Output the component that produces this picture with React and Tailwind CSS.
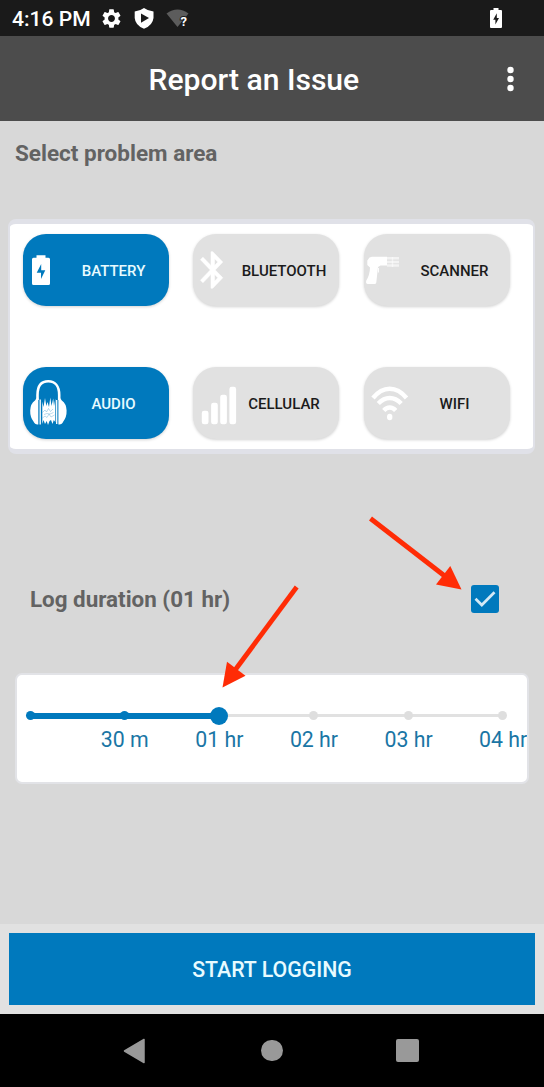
import React from "react";
import { MdSettings } from "react-icons/md";

function StatusBar() {
  return (
    <div className="flex h-9 items-center bg-[#1a1a1a] pl-3 text-white">
      <span className="w-[79px] whitespace-nowrap pt-[2px] text-[21.1px] leading-[34px] font-medium">4:16 PM</span>
      <MdSettings className="ml-[8.5px] size-[23px]" />
      <svg className="ml-[11.5px] h-9 w-5" viewBox="134 0 20 36">
        <path d="M144 8Q148 11 153.500 11.500V18Q152.700 25.500 144 28.700Q135.300 25.500 134.700 18V11.500Q140 11 144 8Z" fill="#fff" />
        <path d="M141 13.500L149 18.100L141 22.700Z" fill="#1a1a1a" />
      </svg>
      <svg className="ml-[12px] h-9 w-6" viewBox="166 0 24 36">
        <path d="M166.500 13.500Q177.500 5.500 188.500 13.500L177.500 27Z" fill="#5c5c5c" />
        <text x="180.500" y="26" fontSize="13" fontWeight="700" fill="#fff" stroke="#1a1a1a" strokeWidth="2" paintOrder="stroke">?</text>
      </svg>
      <svg className="mr-[41px] ml-auto h-9 w-3.5" viewBox="489 0 14 36">
        <path d="M493.500 8h5v2h2.500q1 0 1 1v16q0 1-1 1h-10q-1 0-1-1v-16q0-1 1-1h2.500z" fill="#fff" />
        <path d="M496.800 13.200L493.200 19.800H495.400V24.500L499 18H496.800Z" fill="#1a1a1a" />
      </svg>
    </div>
  );
}

const BatteryIcon = () => (
  <>
    <path d="M13.500 21.200h9v2.600h3q1.500 0 1.500 1.500v24.200q0 1.500-1.500 1.500h-15q-1.500 0-1.500-1.500v-24.200q0-1.500 1.500-1.500h3z" fill="#fff" />
    <path d="M18.200 30V36.200H22.300L18 45V38.800H13.700Z" fill="#0079bd" />
  </>
);

const BluetoothIcon = () => (
  <path
    transform="translate(-1.300 14) scale(1.755 1.830)"
    fill="#fff"
    stroke="#fff"
    strokeWidth="0.300"
    d="M17.710 7.710L12 2h-1v7.590L6.410 5 5 6.410 10.590 12 5 17.590 6.410 19 11 14.410V22h1l5.710-5.710-4.300-4.290 4.300-4.290zM13 5.830l1.880 1.880L13 9.590V5.830zm1.880 10.460L13 18.170v-3.760l1.880 1.880z"
  />
);

const ScannerIcon = () => (
  <>
    <path d="M5.500 23.600L8 22.800H23V31.600H16.500L14 33L12.300 48.500Q12 50 10.500 50H3.700Q2 50 2 48.300L2.300 46.500Q5.800 41 6 33.500L3.300 31V26.500Z" fill="#fff" />
    <path d="M14.500 34V38.500" stroke="#fff" strokeWidth="0.900" />
    <path d="M23 24.200H35M23 28H35M23 31.500H35" stroke="#fff" strokeOpacity="0.600" strokeWidth="2.400" />
    <path d="M28.500 23V33" stroke="#fff" strokeOpacity="0.500" strokeWidth="1.500" />
  </>
);

const AudioIcon = () => (
  <>
    <path d="M14.500 33V28C14.500 19 18.500 14.300 25.300 14.300C32 14.300 36.200 19 36.200 28V33" fill="none" stroke="#fff" strokeWidth="2.600" />
    <path d="M15.300 30.500V57.500Q12 58 10.500 54.500Q7 50 7.200 43.500Q7.500 36.500 12 33.500Q13 31 15.300 30.500Z" fill="#fff" />
    <path d="M35.400 30.500V57.500Q39 58 40.300 54.500Q43.800 50 43.600 43.500Q43.300 36.500 38.800 33.500Q37.800 31 35.400 30.500Z" fill="#fff" />
    <path d="M17.200 32.500V57.500M33.700 33V57" stroke="#fff" strokeWidth="1.300" />
    <path d="M19.300 34.500L20.500 40L22 31L23.300 39L24.500 35L26 40L27.300 30.500L28.500 39L30.200 31.500L31 39L32.300 31.500V55L30.800 53L29.500 57L28 53L26.500 54L25 58L23.700 54L22 57L20.500 53L19.300 57Z" fill="#fff" />
    <path d="M19.500 45.500L22 43L23.500 45L25.500 41.500L27.500 44.500L30 42M19.500 51L22 49L24 50.500L26 47L28 50L31.500 48M21 47.500L24 46.500L27 47L30.500 45.500" fill="none" stroke="#0079bd" strokeOpacity="0.450" strokeWidth="0.600" />
  </>
);

const CellularIcon = () => (
  <g fill="#fff">
    <rect x="8.800" y="43.700" width="6.700" height="13.600" rx="2.300" />
    <rect x="18.100" y="35.700" width="6.700" height="21.600" rx="2.300" />
    <rect x="27.200" y="27.700" width="6.700" height="29.600" rx="2.300" />
    <rect x="36.400" y="19.700" width="6.700" height="37.600" rx="2.300" />
  </g>
);

const WifiIcon = () => (
  <g fill="none" stroke="#fff" strokeWidth="4.400">
    <path d="M9 31Q16.500 21.700 25.700 21.700Q35 21.700 42.500 31" />
    <path d="M14.300 36.500Q19.500 31 25.700 31Q32 31 37.200 36.500" />
    <path d="M19.800 43.500Q22.500 40.500 25.700 40.500Q29 40.500 31.700 43.500" />
    <ellipse cx="25.700" cy="50" rx="2.700" ry="3.200" fill="#fff" stroke="none" />
  </g>
);

const areas = [
  { label: "BATTERY", Icon: BatteryIcon, active: true },
  { label: "BLUETOOTH", Icon: BluetoothIcon },
  { label: "SCANNER", Icon: ScannerIcon },
  { label: "AUDIO", Icon: AudioIcon, active: true },
  { label: "CELLULAR", Icon: CellularIcon },
  { label: "WIFI", Icon: WifiIcon },
];

function AreaButton({ label, Icon, active }) {
  return (
    <button
      className={
        "flex h-[72px] w-[146px] items-center rounded-[23px] shadow-[0_1px_3px_rgba(0,0,0,0.18)] " +
        (active ? "bg-[#0079bd] text-[#e8fbff]" : "bg-[#e1e1e1] text-[#1b1b1b]")
      }
    >
      <svg className="-mr-[9px] h-[72px] w-[45px] shrink-0" viewBox="0 0 45 72">
        <Icon />
      </svg>
      <span className="flex-1 pt-[2px] text-center text-[15px] leading-[20px] font-medium">{label}</span>
    </button>
  );
}

const ticks = ["", "30 m", "01 hr", "02 hr", "03 hr", "04 hr"];

function DurationSlider() {
  return (
    <div className="mx-[15px] h-[111px] overflow-hidden rounded-[7px] border-2 border-[#e2e3e7] bg-white pt-[31px]">
      <div className="relative ml-[8.5px] flex h-[19px] w-[482px] items-center justify-between">
        <div className="absolute left-[5px] flex w-[472px] items-center">
          <div className="h-[6px] w-2/5 bg-[#0079bd]" />
          <div className="h-[3px] w-3/5 bg-[#e1e1e1]" />
        </div>
        {ticks.map((t, i) => (
          <div key={i} className="relative flex w-[9px] items-center justify-center">
            <div className={i === 2 ? "size-[18px] shrink-0 rounded-full bg-[#0079bd]" : i < 2 ? "size-[9px] rounded-full bg-[#0079bd]" : "size-[9px] rounded-full bg-[#dedede]"} />
          </div>
        ))}
      </div>
      <div className="ml-[60.5px] flex w-[473px]">
        {ticks.slice(1).map((t) => (
          <span key={t} className="w-[94.600px] shrink-0 text-center text-[21.300px] leading-[30px] text-[#1a76a5]">
            {t}
          </span>
        ))}
      </div>
    </div>
  );
}

function Pointers() {
  return (
    <svg className="pointer-events-none absolute top-0 left-0 h-[803px] w-[544px]" viewBox="0 121 544 803">
      <g stroke="#ff2c06" strokeWidth="4.800" fill="#ff2c06">
        <path d="M370.500 518.500L446 577" />
        <path d="M296.700 587L234 671.500" />
        <path stroke="none" d="M450.300 566L436 584.500L461.500 589.500Z" />
        <path stroke="none" d="M227 661.800L245.500 675.800L222.500 687.500Z" />
      </g>
    </svg>
  );
}

export default function App() {
  return (
    <div className="flex h-[1087px] w-[544px] flex-col overflow-hidden bg-[#d8d8d8] font-['Roboto',sans-serif]">
      <StatusBar />
      <header className="flex h-[85px] items-center bg-[#4c4c4c] text-white">
        <h1 className="ml-[148.5px] flex-1 pt-[2px] text-[30.1px] leading-[40px] font-medium whitespace-nowrap">Report an Issue</h1>
        <svg className="mr-[28px] h-[26px] w-[11px]" viewBox="0 0 11 26">
          <circle cx="5.500" cy="4" r="3.200" fill="#fff" />
          <circle cx="5.500" cy="13" r="3.200" fill="#fff" />
          <circle cx="5.500" cy="22" r="3.200" fill="#fff" />
        </svg>
      </header>
      <main className="relative flex h-[803px] flex-col">
        <h2 className="mt-[17px] ml-[15px] text-[22.500px] leading-[30px] font-bold text-[#636363]">Select problem area</h2>
        <section className="mr-[9px] ml-[8px] mt-[51px] h-[235px] rounded-[8px] border-x-2 border-y-[5px] border-[#e0e1e8] bg-white pt-[10px] pl-[12.5px]">
          <div className="grid w-[487px] grid-cols-[146px_146px_146px] justify-between gap-y-[61px]">
            {areas.map((a) => (
              <AreaButton key={a.label} {...a} />
            ))}
          </div>
        </section>
        <div className="mt-[130px] mr-[45px] ml-[30px] flex h-[30px] items-center justify-between">
          <h2 className="text-[22.400px] leading-[30px] font-bold text-[#636363]">Log duration (01 hr)</h2>
          <svg className="size-[28px]" viewBox="0 0 28 28">
            <rect width="28" height="28" rx="3" fill="#0079bd" />
            <path d="M4.500 13.800L10.800 20L23.500 7.300" fill="none" stroke="#d3e9f5" strokeWidth="2.700" />
          </svg>
        </div>
        <div className="mt-[59px]">
          <DurationSlider />
        </div>
        <Pointers />
      </main>
      <footer className="h-[90px] bg-[#e1e1e1] px-[9px] py-[9px]">
        <button className="h-[72px] w-full bg-[#0079bd] pt-[2px] text-[21.300px] font-medium text-[#e8fbff]">START LOGGING</button>
      </footer>
      <nav className="flex h-[73px] items-center bg-black pl-[122px]">
        <svg className="h-[28px] w-[24px]" viewBox="0 0 24 28">
          <path d="M2.500 14L22 2.500V25.500Z" fill="#999" stroke="#999" strokeWidth="1.500" strokeLinejoin="round" />
        </svg>
        <div className="ml-[115px] size-[21.500px] rounded-full bg-[#999]" />
        <div className="ml-[113.500px] size-[23px] rounded-[2px] bg-[#999]" />
      </nav>
    </div>
  );
}
